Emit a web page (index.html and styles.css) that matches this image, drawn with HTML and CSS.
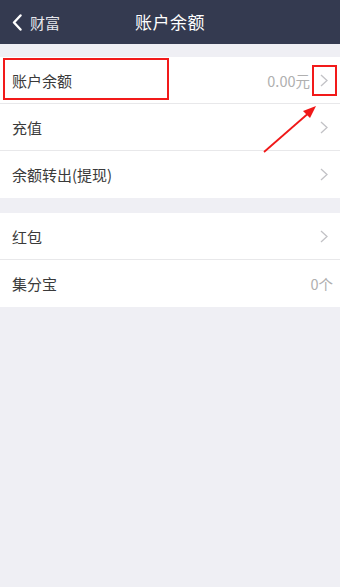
FILE: index.html
```html
<!DOCTYPE html>
<html>
<head>
<meta charset="utf-8">
<link rel="stylesheet" href="styles.css">
</head>
<body>
<div class="page">
  <header class="nav">
    <div class="back">
      <svg class="back-icon" width="10" height="17" viewBox="0 0 10 17"><path d="M8.5 1.5 L2 8.5 L8.5 15.5" fill="none" stroke="#fff" stroke-width="2.4" stroke-linecap="round" stroke-linejoin="round"/></svg>
      <span>财富</span>
    </div>
    <div class="title">账户余额</div>
  </header>
  <section class="group first">
    <div class="row"><span class="label">账户余额</span><span class="value">0.00元</span><svg class="chev" width="8" height="13" viewBox="0 0 8 13"><path d="M1 1 L7 6.5 L1 12" fill="none" stroke="#c2c2c6" stroke-width="1.3"/></svg></div>
    <div class="row"><span class="label">充值</span><svg class="chev" width="8" height="13" viewBox="0 0 8 13"><path d="M1 1 L7 6.5 L1 12" fill="none" stroke="#c2c2c6" stroke-width="1.3"/></svg></div>
    <div class="row"><span class="label">余额转出(提现)</span><svg class="chev" width="8" height="13" viewBox="0 0 8 13"><path d="M1 1 L7 6.5 L1 12" fill="none" stroke="#c2c2c6" stroke-width="1.3"/></svg></div>
  </section>
  <section class="group">
    <div class="row"><span class="label">红包</span><svg class="chev" width="8" height="13" viewBox="0 0 8 13"><path d="M1 1 L7 6.5 L1 12" fill="none" stroke="#c2c2c6" stroke-width="1.3"/></svg></div>
    <div class="row"><span class="label">集分宝</span><span class="value plain">0个</span></div>
  </section>

  <div class="mark mark-label"></div>
  <div class="mark mark-chev"></div>
  <svg class="arrow" width="80" height="60" viewBox="0 0 80 60">
    <line x1="5" y1="55" x2="52" y2="14" stroke="#f01818" stroke-width="1.8"/>
    <polygon points="57,9 44,14 51,21" fill="#f01818"/>
  </svg>
</div>
</body>
</html>
```
FILE: styles.css
```css
* { box-sizing: border-box; }
html, body { margin: 0; padding: 0; }
body {
  width: 340px;
  height: 587px;
  background: #efeff4;
  font-family: "Noto Sans CJK SC", "Noto Sans", sans-serif;
  overflow: hidden;
}
.page { position: relative; width: 340px; height: 587px; }
.nav {
  height: 44px;
  background: #343a50;
  position: relative;
  display: flex;
  align-items: center;
  justify-content: center;
}
.back {
  position: absolute;
  left: 12px;
  top: 0;
  height: 44px;
  display: flex;
  align-items: center;
  gap: 8px;
  color: #e6e7ec;
  font-size: 15px;
}
.back-icon { margin-top: 1px; }
.title {
  color: #ffffff;
  font-size: 17px;
  letter-spacing: 0.5px;
  margin-top: -1px;
}
.group {
  background: #fff;
  margin-top: 15px;
}
.group.first { margin-top: 13px; }
.row {
  height: 47px;
  display: flex;
  align-items: center;
  padding: 0 12px 0 12px;
  border-bottom: 1px solid #e8e8ea;
}
.row:last-child { border-bottom: none; }
.group:last-child .row:last-child { height: 46px; }
.label {
  flex: 1;
  font-size: 15px;
  color: #3a3a3a;
}
.value {
  font-size: 14.5px;
  color: #b0b0b0;
  margin-right: 10px;
}
.value.plain { margin-right: -5px; }
.chev { display: block; }
.mark { position: absolute; border: 2px solid #f21a1a; }
.mark-label { left: 3px; top: 58px; width: 166px; height: 42px; }
.mark-chev { left: 312px; top: 65px; width: 25px; height: 31px; }
.arrow { position: absolute; left: 259px; top: 97px; }
```
